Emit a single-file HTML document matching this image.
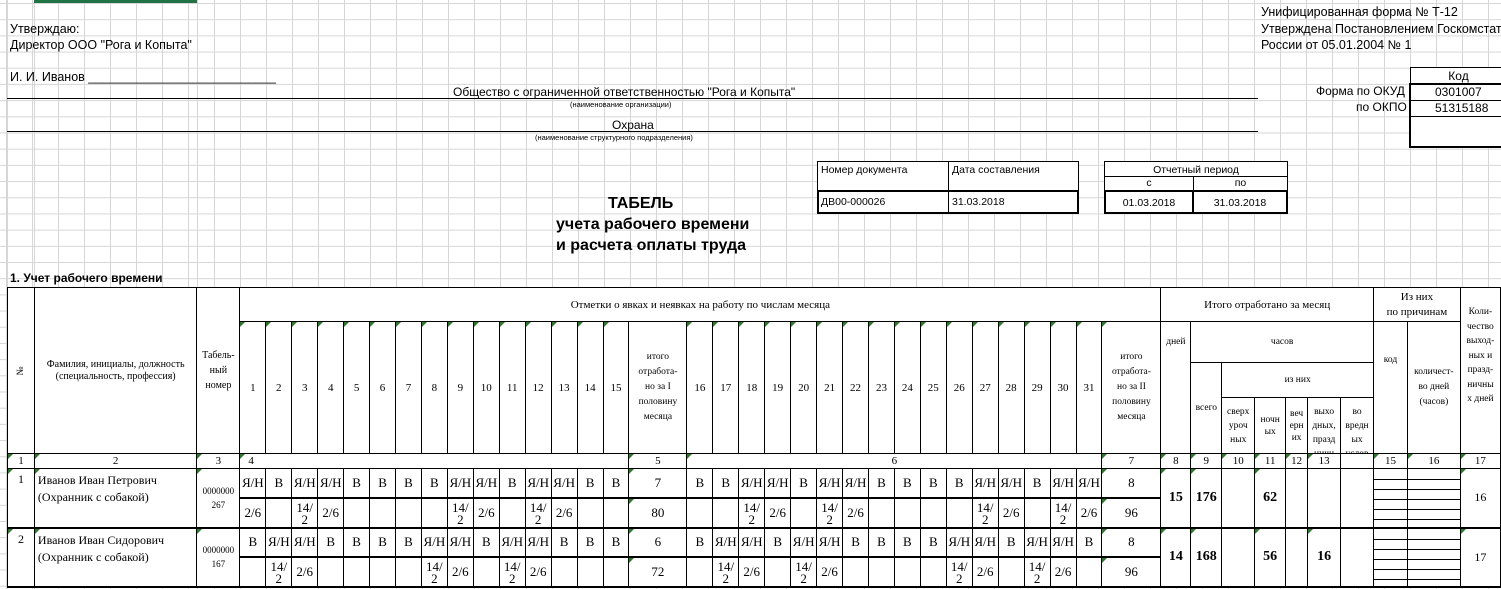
<!DOCTYPE html>
<html><head><meta charset="utf-8">
<style>
html,body{margin:0;padding:0;}
body{width:1501px;height:589px;position:relative;overflow:hidden;background:#fff;
font-family:"Liberation Sans",sans-serif;color:#000;
background-image:
linear-gradient(to right,#d6d6d6 1px,transparent 1px),
linear-gradient(to bottom,#d6d6d6 1px,transparent 1px);
background-size:26px 16.2px;background-position:240px 3px;}
.vl{position:absolute;top:0;height:589px;width:1px;background:#d6d6d6;}
.t{position:absolute;white-space:nowrap;}
.hl{position:absolute;height:1px;background:#000;}
table.m{position:absolute;left:7px;top:287px;border-collapse:collapse;table-layout:fixed;
font-family:"Liberation Serif",serif;background:#fff;}
table.m td{border:1px solid #000;padding:0;text-align:center;vertical-align:middle;overflow:hidden;position:relative;}
.h{font-size:9.5px;line-height:12px;}
.n{font-size:11px;}
.d{font-size:13px;}
.b{font-weight:bold;font-size:14px;}
tr.tb td{border-bottom:2px solid #000;}
.s{line-height:12px;height:28px;overflow:hidden;padding-top:3px;box-sizing:border-box;}
.g::before{content:"";position:absolute;left:0;top:0;border-top:5px solid #2a7a2a;border-right:5px solid transparent;}
.sub{position:absolute;left:0;right:0;height:1px;background:#000;}
.bx{position:absolute;border:1px solid #000;background:#fff;font-family:"Liberation Sans",sans-serif;font-size:11px;}
</style></head><body>
<div class="vl" style="left:7px"></div>
<div class="vl" style="left:34px"></div>
<div class="vl" style="left:197px"></div>
<div style="position:absolute;left:34px;top:0;width:163px;height:3px;background:#217346"></div>

<div class="t" style="left:10px;top:22px;font-size:12.5px">Утверждаю:</div>
<div class="t" style="left:10px;top:38px;font-size:12.5px">Директор ООО "Рога и Копыта"</div>
<div class="t" style="left:10px;top:70px;font-size:12.5px">И. И. Иванов ___________________________</div>

<div class="hl" style="left:7px;top:98px;width:1251px"></div>
<div class="hl" style="left:7px;top:131px;width:1251px"></div>
<div class="t" style="left:453px;top:85px;font-size:12px">Общество с ограниченной ответственностью "Рога и Копыта"</div>
<div class="t" style="left:570px;top:100px;font-size:7.5px">(наименование организации)</div>
<div class="t" style="left:612px;top:118px;font-size:12px">Охрана</div>
<div class="t" style="left:535px;top:133px;font-size:7.5px">(наименование структурного подразделения)</div>

<div class="t" style="left:1261px;top:5px;font-size:12.5px">Унифицированная форма № Т-12</div>
<div class="t" style="left:1261px;top:22px;font-size:12.5px">Утверждена Постановлением Госкомстата</div>
<div class="t" style="left:1261px;top:38px;font-size:12.5px">России от 05.01.2004 № 1</div>
<div class="t" style="left:1316px;top:84px;font-size:12px">Форма по ОКУД</div>
<div class="t" style="left:1356px;top:100px;font-size:12px">по ОКПО</div>
<div style="position:absolute;left:1410px;top:67px;width:95px;height:16px;border-left:1px solid #000;border-top:1px solid #000;background:#fff;font-size:12px;text-align:center;line-height:17px">Код</div>
<div style="position:absolute;left:1409px;top:83px;width:96px;height:61px;border:2px solid #000;background:#fff;font-size:12px;">
<div style="height:15px;border-bottom:1px solid #000;line-height:15px;padding-left:24px">0301007</div>
<div style="height:15px;border-bottom:1px solid #000;line-height:15px;padding-left:24px">51315188</div>
</div>

<div class="t" style="left:608px;top:195px;font-size:16px;font-weight:bold">ТАБЕЛЬ</div>
<div class="t" style="left:556px;top:216px;font-size:16px;font-weight:bold">учета рабочего времени</div>
<div class="t" style="left:556px;top:237px;font-size:16px;font-weight:bold">и расчета оплаты труда</div>

<div class="bx" style="left:817px;top:161px;width:260px;height:29px;border-bottom:none">
<div style="position:absolute;left:130px;top:0;width:1px;height:29px;background:#000"></div>
<div style="position:absolute;left:3px;top:2px;font-size:10.5px">Номер документа</div>
<div style="position:absolute;left:134px;top:2px;font-size:10.5px">Дата составления</div>
</div>
<div class="bx" style="left:817px;top:190px;width:258px;height:20px;border:2px solid #000">
<div style="position:absolute;left:129px;top:0;width:1px;height:20px;background:#000"></div>
<div style="position:absolute;left:2px;top:4px;font-size:10.5px">ДВ00-000026</div>
<div style="position:absolute;left:133px;top:4px;font-size:10.5px">31.03.2018</div>
</div>
<div class="bx" style="left:1104px;top:161px;width:182px;height:29px;border-bottom:none;font-size:10.5px">
<div style="height:14px;border-bottom:1px solid #000;text-align:center;line-height:16px">Отчетный период</div>
<div style="position:absolute;left:88px;top:15px;width:1px;height:14px;background:#000"></div>
<div style="position:absolute;left:0;width:88px;top:15px;text-align:center">с</div>
<div style="position:absolute;left:89px;width:93px;top:15px;text-align:center">по</div>
</div>
<div class="bx" style="left:1104px;top:190px;width:180px;height:20px;border:2px solid #000;font-size:10.5px">
<div style="position:absolute;left:86px;top:0;width:2px;height:20px;background:#000"></div>
<div style="position:absolute;left:0;width:86px;top:5px;text-align:center">01.03.2018</div>
<div style="position:absolute;left:88px;width:92px;top:5px;text-align:center">31.03.2018</div>
</div>

<div class="t" style="left:10px;top:271px;font-size:12px;font-weight:bold">1. Учет рабочего времени</div>

<table class="m">
<colgroup>
<col style="width:27px"><col style="width:163px"><col style="width:43px">
<col style="width:26px"><col style="width:26px"><col style="width:26px"><col style="width:26px"><col style="width:26px"><col style="width:26px"><col style="width:26px"><col style="width:26px"><col style="width:26px"><col style="width:26px"><col style="width:26px"><col style="width:26px"><col style="width:26px"><col style="width:26px"><col style="width:26px">
<col style="width:58px">
<col style="width:26px"><col style="width:26px"><col style="width:26px"><col style="width:26px"><col style="width:26px"><col style="width:26px"><col style="width:26px"><col style="width:26px"><col style="width:26px"><col style="width:26px"><col style="width:26px"><col style="width:26px"><col style="width:26px"><col style="width:26px"><col style="width:26px"><col style="width:26px">
<col style="width:59px">
<col style="width:30px"><col style="width:31px"><col style="width:33px"><col style="width:31px"><col style="width:22px"><col style="width:33px"><col style="width:33px">
<col style="width:34px"><col style="width:53px"><col style="width:40px">
</colgroup>
<tr style="height:34px">
<td rowspan="4" class="h"><div style="transform:rotate(-90deg)">№</div></td>
<td rowspan="4" class="h" style="font-size:10px">Фамилия, инициалы, должность<br>(специальность, профессия)</td>
<td rowspan="4" class="h" style="font-size:10px;line-height:15px">Табель-<br>ный<br>номер</td>
<td colspan="33" class="n">Отметки о явках и неявках на работу по числам месяца</td>
<td colspan="7" class="n">Итого отработано за месяц</td>
<td colspan="2" class="n" style="line-height:15px">Из них<br>по причинам</td>
<td rowspan="4" class="h" style="vertical-align:top;padding-top:17px;line-height:14.5px">Коли-<br>чество<br>выход-<br>ных и<br>празд-<br>ничны<br>х дней</td>
</tr>
<tr style="height:41px">
<td rowspan="3" class="n g">1</td><td rowspan="3" class="n g">2</td><td rowspan="3" class="n g">3</td><td rowspan="3" class="n g">4</td><td rowspan="3" class="n g">5</td><td rowspan="3" class="n g">6</td><td rowspan="3" class="n g">7</td><td rowspan="3" class="n g">8</td><td rowspan="3" class="n g">9</td><td rowspan="3" class="n g">10</td><td rowspan="3" class="n g">11</td><td rowspan="3" class="n g">12</td><td rowspan="3" class="n g">13</td><td rowspan="3" class="n g">14</td><td rowspan="3" class="n g">15</td>
<td rowspan="3" class="h" style="line-height:15px">итого<br>отработа-<br>но за I<br>половину<br>месяца</td>
<td rowspan="3" class="n g">16</td><td rowspan="3" class="n g">17</td><td rowspan="3" class="n g">18</td><td rowspan="3" class="n g">19</td><td rowspan="3" class="n g">20</td><td rowspan="3" class="n g">21</td><td rowspan="3" class="n g">22</td><td rowspan="3" class="n g">23</td><td rowspan="3" class="n g">24</td><td rowspan="3" class="n g">25</td><td rowspan="3" class="n g">26</td><td rowspan="3" class="n g">27</td><td rowspan="3" class="n g">28</td><td rowspan="3" class="n g">29</td><td rowspan="3" class="n g">30</td><td rowspan="3" class="n g">31</td>
<td rowspan="3" class="h g" style="line-height:15px">итого<br>отработа-<br>но за II<br>половину<br>месяца</td>
<td rowspan="3" class="h" style="vertical-align:top;padding-top:14px">дней</td>
<td colspan="6" class="h">часов</td>
<td rowspan="3" class="h" style="vertical-align:top;padding-top:32px">код</td>
<td rowspan="3" class="h" style="line-height:15px">количест-<br>во дней<br>(часов)</td>
</tr>
<tr style="height:35px">
<td rowspan="2" class="h">всего</td>
<td colspan="5" class="h">из них</td>
</tr>
<tr style="height:55px">
<td class="h" style="line-height:14px">сверх<br>уроч<br>ных</td>
<td class="h">ночн<br>ых</td>
<td class="h">веч<br>ерн<br>их</td>
<td class="h" style="line-height:14px;height:55px"><div style="height:54px;overflow:hidden;padding-top:6px;box-sizing:border-box">выхо<br>дных,<br>празд<br>ничн</div></td>
<td class="h" style="line-height:14px"><div style="height:54px;overflow:hidden;padding-top:6px;box-sizing:border-box">во<br>вредн<br>ых<br>услов</div></td>
</tr>
<tr style="height:15px" class="n">
<td class="g">1</td><td class="g">2</td><td class="g">3</td>
<td colspan="15" class="g" style="text-align:left;padding-left:8px">4</td>
<td class="g">5</td>
<td colspan="16" class="g">6</td>
<td class="g">7</td>
<td class="g">8</td><td class="g">9</td><td class="g">10</td><td class="g">11</td><td class="g">12</td><td class="g">13</td><td></td>
<td class="g">15</td><td class="g">16</td><td class="g">17</td>
</tr>
<!-- employee 1 -->
<tr class="d tb" style="height:29px">
<td rowspan="2" class="g" style="vertical-align:top;padding-top:3px;font-size:12px;border-bottom:2px solid #000">1</td>
<td rowspan="2" class="g" style="text-align:left;vertical-align:top;padding:3px 0 0 3px;font-size:12px;line-height:17px;border-bottom:2px solid #000">Иванов Иван Петрович<br>(Охранник с собакой)</td>
<td rowspan="2" class="g" style="font-size:9px;line-height:14px;border-bottom:2px solid #000">0000000<br>267</td>
<td>Я/Н</td><td>В</td><td>Я/Н</td><td>Я/Н</td><td>В</td><td>В</td><td>В</td><td>В</td><td>Я/Н</td><td>Я/Н</td><td>В</td><td>Я/Н</td><td>Я/Н</td><td>В</td><td>В</td>
<td class="g">7</td>
<td>В</td><td>В</td><td>Я/Н</td><td>Я/Н</td><td>В</td><td>Я/Н</td><td>Я/Н</td><td>В</td><td>В</td><td>В</td><td>В</td><td>Я/Н</td><td>Я/Н</td><td>В</td><td>Я/Н</td><td>Я/Н</td>
<td class="g">8</td>
<td rowspan="2" class="b g">15</td><td rowspan="2" class="b g">176</td><td rowspan="2"></td><td rowspan="2" class="b g">62</td><td rowspan="2"></td><td rowspan="2"></td><td rowspan="2"></td>
<td rowspan="2"><div class="sub" style="top:10px"></div><div class="sub" style="top:20px"></div><div class="sub" style="top:30px"></div><div class="sub" style="top:40px"></div><div class="sub" style="top:50px"></div></td>
<td rowspan="2"><div class="sub" style="top:10px"></div><div class="sub" style="top:20px"></div><div class="sub" style="top:30px"></div><div class="sub" style="top:40px"></div><div class="sub" style="top:50px"></div></td>
<td rowspan="2" class="g" style="font-size:12px">16</td>
</tr>
<tr class="d tb" style="height:29px">
<td>2/6</td><td></td><td><div class="s">14/<br>2</div></td><td>2/6</td><td></td><td></td><td></td><td></td><td><div class="s">14/<br>2</div></td><td>2/6</td><td></td><td><div class="s">14/<br>2</div></td><td>2/6</td><td></td><td></td>
<td class="g">80</td>
<td></td><td></td><td><div class="s">14/<br>2</div></td><td>2/6</td><td></td><td><div class="s">14/<br>2</div></td><td>2/6</td><td></td><td></td><td></td><td></td><td><div class="s">14/<br>2</div></td><td>2/6</td><td></td><td><div class="s">14/<br>2</div></td><td>2/6</td>
<td class="g">96</td>
</tr>
<!-- employee 2 -->
<tr class="d tb" style="height:29px">
<td rowspan="2" class="g" style="vertical-align:top;padding-top:3px;font-size:12px;border-bottom:2px solid #000">2</td>
<td rowspan="2" class="g" style="text-align:left;vertical-align:top;padding:3px 0 0 3px;font-size:12px;line-height:17px;border-bottom:2px solid #000">Иванов Иван Сидорович<br>(Охранник с собакой)</td>
<td rowspan="2" class="g" style="font-size:9px;line-height:14px;border-bottom:2px solid #000">0000000<br>167</td>
<td>В</td><td>Я/Н</td><td>Я/Н</td><td>В</td><td>В</td><td>В</td><td>В</td><td>Я/Н</td><td>Я/Н</td><td>В</td><td>Я/Н</td><td>Я/Н</td><td>В</td><td>В</td><td>В</td>
<td class="g">6</td>
<td>В</td><td>Я/Н</td><td>Я/Н</td><td>В</td><td>Я/Н</td><td>Я/Н</td><td>В</td><td>В</td><td>В</td><td>В</td><td>Я/Н</td><td>Я/Н</td><td>В</td><td>Я/Н</td><td>Я/Н</td><td>В</td>
<td class="g">8</td>
<td rowspan="2" class="b g">14</td><td rowspan="2" class="b g">168</td><td rowspan="2"></td><td rowspan="2" class="b g">56</td><td rowspan="2"></td><td rowspan="2" class="b g">16</td><td rowspan="2"></td>
<td rowspan="2"><div class="sub" style="top:10px"></div><div class="sub" style="top:20px"></div><div class="sub" style="top:30px"></div><div class="sub" style="top:40px"></div><div class="sub" style="top:50px"></div></td>
<td rowspan="2"><div class="sub" style="top:10px"></div><div class="sub" style="top:20px"></div><div class="sub" style="top:30px"></div><div class="sub" style="top:40px"></div><div class="sub" style="top:50px"></div></td>
<td rowspan="2" class="g" style="font-size:12px">17</td>
</tr>
<tr class="d tb" style="height:29px">
<td></td><td><div class="s">14/<br>2</div></td><td>2/6</td><td></td><td></td><td></td><td></td><td><div class="s">14/<br>2</div></td><td>2/6</td><td></td><td><div class="s">14/<br>2</div></td><td>2/6</td><td></td><td></td><td></td>
<td class="g">72</td>
<td></td><td><div class="s">14/<br>2</div></td><td>2/6</td><td></td><td><div class="s">14/<br>2</div></td><td>2/6</td><td></td><td></td><td></td><td></td><td><div class="s">14/<br>2</div></td><td>2/6</td><td></td><td><div class="s">14/<br>2</div></td><td>2/6</td><td></td>
<td class="g">96</td>
</tr>
</table>
</body></html>
